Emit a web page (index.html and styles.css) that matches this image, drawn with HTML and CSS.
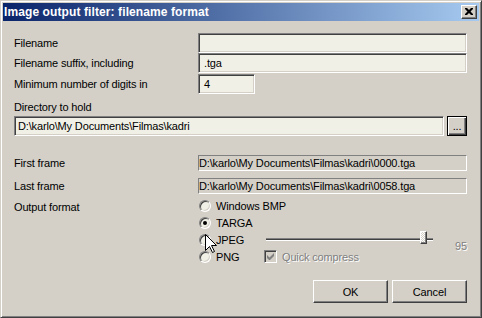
FILE: index.html
```html
<!DOCTYPE html>
<html>
<head>
<meta charset="utf-8">
<link rel="stylesheet" href="styles.css">
</head>
<body>
<div class="window">
  <div class="titlebar">
    <span class="title">Image output filter: filename format</span>
    <div class="close"><svg width="8" height="7" viewBox="0 0 8 7"><path d="M0 0h2l2 2 2-2h2v1L5.5 3.5 8 6v1H6L4 5 2 7H0V6l2.5-2.5L0 1z" fill="#000"/></svg></div>
  </div>
  <div class="client">
    <div class="row r1"><span class="lbl">Filename</span><div class="edit wide"></div></div>
    <div class="row"><span class="lbl">Filename suffix, including</span><div class="edit wide">.tga</div></div>
    <div class="row r3"><span class="lbl">Minimum number of digits in</span><div class="edit short">4</div></div>
    <div class="caption">Directory to hold</div>
    <div class="dirrow"><div class="edit dir">D:\karlo\My Documents\Filmas\kadri</div><div class="browse">...</div></div>
    <div class="row srow first"><span class="lbl">First frame</span><div class="static">D:\karlo\My Documents\Filmas\kadri\0000.tga</div></div>
    <div class="row srow last"><span class="lbl">Last frame</span><div class="static">D:\karlo\My Documents\Filmas\kadri\0058.tga</div></div>
    <div class="fmt">
      <span class="lbl fmtlbl">Output format</span>
      <div class="opts">
        <div class="opt"><span class="radio"></span><span>Windows BMP</span></div>
        <div class="opt o2"><span class="radio on"></span><span>TARGA</span></div>
        <div class="opt o3"><span class="radio"></span><span>JPEG</span></div>
        <div class="slider"><div class="track"></div><div class="thumb"></div></div>
        <div class="val">95</div>
        <div class="opt o4"><span class="radio"></span><span>PNG</span></div>
        <div class="chk"><span class="box"><svg width="7" height="7" viewBox="0 0 7 7"><path d="M0 2v3l2 2h1l4-4V0L2.5 4.5z" fill="#808080"/></svg></span><span class="dis">Quick compress</span></div>
      </div>
    </div>
    <div class="buttons"><div class="btn">OK</div><div class="btn">Cancel</div></div>
  </div>
  <svg class="cursor" width="13" height="20" viewBox="0 0 13 20"><path d="M0.5 0.5V16.5L4.5 12.5L7.5 18.5L9.5 17.5L6.5 11.5H11.5Z" fill="#fff" stroke="#000" stroke-width="1"/></svg>
</div>
</body>
</html>
```
FILE: styles.css
```css
* { box-sizing: border-box; }
html, body { margin: 0; padding: 0; background: #d4d0c8; }
body {
  font-family: "Liberation Sans", Arial, sans-serif;
  font-size: 11px;
  letter-spacing: -0.15px;
  color: #000;
}
.window {
  position: relative;
  width: 482px;
  height: 318px;
  background: #d4d0c8;
  border: 1px solid;
  border-color: #d4d0c8 #404040 #404040 #d4d0c8;
  box-shadow: inset 1px 1px 0 #fff, inset -1px -1px 0 #808080;
  padding: 2px;
  display: flex;
  flex-direction: column;
}
.titlebar {
  height: 18px;
  background: linear-gradient(to right, #0a246a, #a6caf0);
  display: flex;
  align-items: center;
  justify-content: space-between;
  padding: 0 2px 0 1px;
}
.title {
  color: #fff;
  font-weight: bold;
  font-size: 12px;
  letter-spacing: 0.1px;
}
.close {
  width: 16px;
  height: 14px;
  background: #d4d0c8;
  border: 1px solid;
  border-color: #fff #404040 #404040 #fff;
  box-shadow: inset -1px -1px 0 #808080;
  display: flex;
  align-items: center;
  justify-content: center;
  padding: 0 1px 1px 0;
}
.close svg { display: block; }
.client {
  flex: 1;
  padding: 12px 12px 0 11px;
  display: flex;
  flex-direction: column;
}
.row {
  display: flex;
  align-items: center;
  height: 20px;
}
.r3 { margin-top: 1px; }
.lbl { width: 184px; flex: none; white-space: nowrap; }
.edit {
  height: 20px;
  background: #f1f0e6;
  border: 1px solid;
  border-color: #808080 #fff #fff #808080;
  box-shadow: inset 1px 1px 0 #404040, inset -1px -1px 0 #d4d0c8;
  padding: 0 4px 0 5px;
  display: flex;
  align-items: center;
  white-space: nowrap;
}
.wide { width: 269px; }
.short { width: 57px; }
.caption { margin-top: 6px; height: 14px; line-height: 14px; }
.dirrow { display: flex; gap: 3px; margin-top: 2px; }
.dir { width: 430px; padding-left: 3px; }
.browse {
  width: 20px;
  height: 20px;
  border: 1px solid #000;
  box-shadow: inset 1px 1px 0 #fff, inset -1px -1px 0 #404040, inset -2px -2px 0 #808080;
  display: flex;
  align-items: flex-end;
  justify-content: center;
  padding-bottom: 3px;
  line-height: 11px;
}
.srow { height: 16px; }
.first { margin-top: 19px; }
.last { margin-top: 7px; }
.static {
  width: 269px;
  height: 16px;
  border: 1px solid;
  border-color: #808080 #fff #fff #808080;
  display: flex;
  align-items: center;
  white-space: nowrap;
  overflow: hidden;
}
.fmt {
  display: flex;
  margin-top: 3px;
}
.fmtlbl { height: 17px; line-height: 20px; }
.opts {
  display: grid;
  grid-template-columns: 68px 177px 1fr;
  grid-template-rows: repeat(4, 17px);
  width: 269px;
}
.opt {
  grid-column: 1;
  display: flex;
  align-items: center;
  gap: 5px;
  padding-left: 1px;
  white-space: nowrap;
  min-width: 0;
}
.o2 { grid-row: 2; }
.o3 { grid-row: 3; }
.o4 { grid-row: 4; }
.radio {
  width: 12px;
  height: 12px;
  border-radius: 50%;
  border: 1px solid;
  border-color: #808080 #fff #fff #808080;
  box-shadow: inset 1px 1px 0 #404040, inset -1px -1px 0 #d4d0c8;
  background: #f1f0e6;
  flex: none;
  display: flex;
  align-items: center;
  justify-content: center;
}
.radio.on::after {
  content: "";
  width: 4px;
  height: 4px;
  border-radius: 50%;
  background: #000;
}
.slider {
  grid-column: 2;
  grid-row: 3;
  position: relative;
  width: 167px;
  display: flex;
  align-items: center;
}
.track {
  width: 100%;
  height: 3px;
  border-top: 1px solid #808080;
  border-bottom: 1px solid #fff;
  background: #404040;
  background-clip: padding-box;
  margin-top: -1px;
}
.thumb {
  position: absolute;
  left: 154px;
  top: 0;
  width: 7px;
  height: 13px;
  background: repeating-conic-gradient(#d4d0c8 0 25%, #fff 0 50%) 0 0 / 2px 2px;
  border: 1px solid;
  border-color: #fff #404040 #404040 #fff;
  box-shadow: inset -1px -1px 0 #808080;
}
.val {
  grid-column: 3;
  grid-row: 3 / span 2;
  align-self: center;
  justify-self: end;
  margin-bottom: 4px;
  color: #808080;
  text-shadow: 1px 1px 0 #fff;
}
.chk {
  grid-column: 2;
  grid-row: 4;
  display: flex;
  align-items: center;
  gap: 5px;
  margin-left: -2px;
  white-space: nowrap;
}
.box {
  width: 13px;
  height: 13px;
  border: 1px solid;
  border-color: #808080 #fff #fff #808080;
  box-shadow: inset 1px 1px 0 #404040, inset -1px -1px 0 #d4d0c8;
  background: #d4d0c8;
  display: flex;
  align-items: center;
  justify-content: center;
  flex: none;
}
.box svg { display: block; }
.dis { color: #808080; text-shadow: 1px 1px 0 #fff; }
.buttons {
  display: flex;
  justify-content: flex-end;
  gap: 4px;
  margin-top: 15px;
}
.btn {
  width: 75px;
  height: 23px;
  border: 1px solid;
  border-color: #fff #404040 #404040 #fff;
  box-shadow: inset -1px -1px 0 #808080;
  display: flex;
  align-items: center;
  justify-content: center;
}
.cursor {
  position: absolute;
  left: 204px;
  top: 233px;
}
```
